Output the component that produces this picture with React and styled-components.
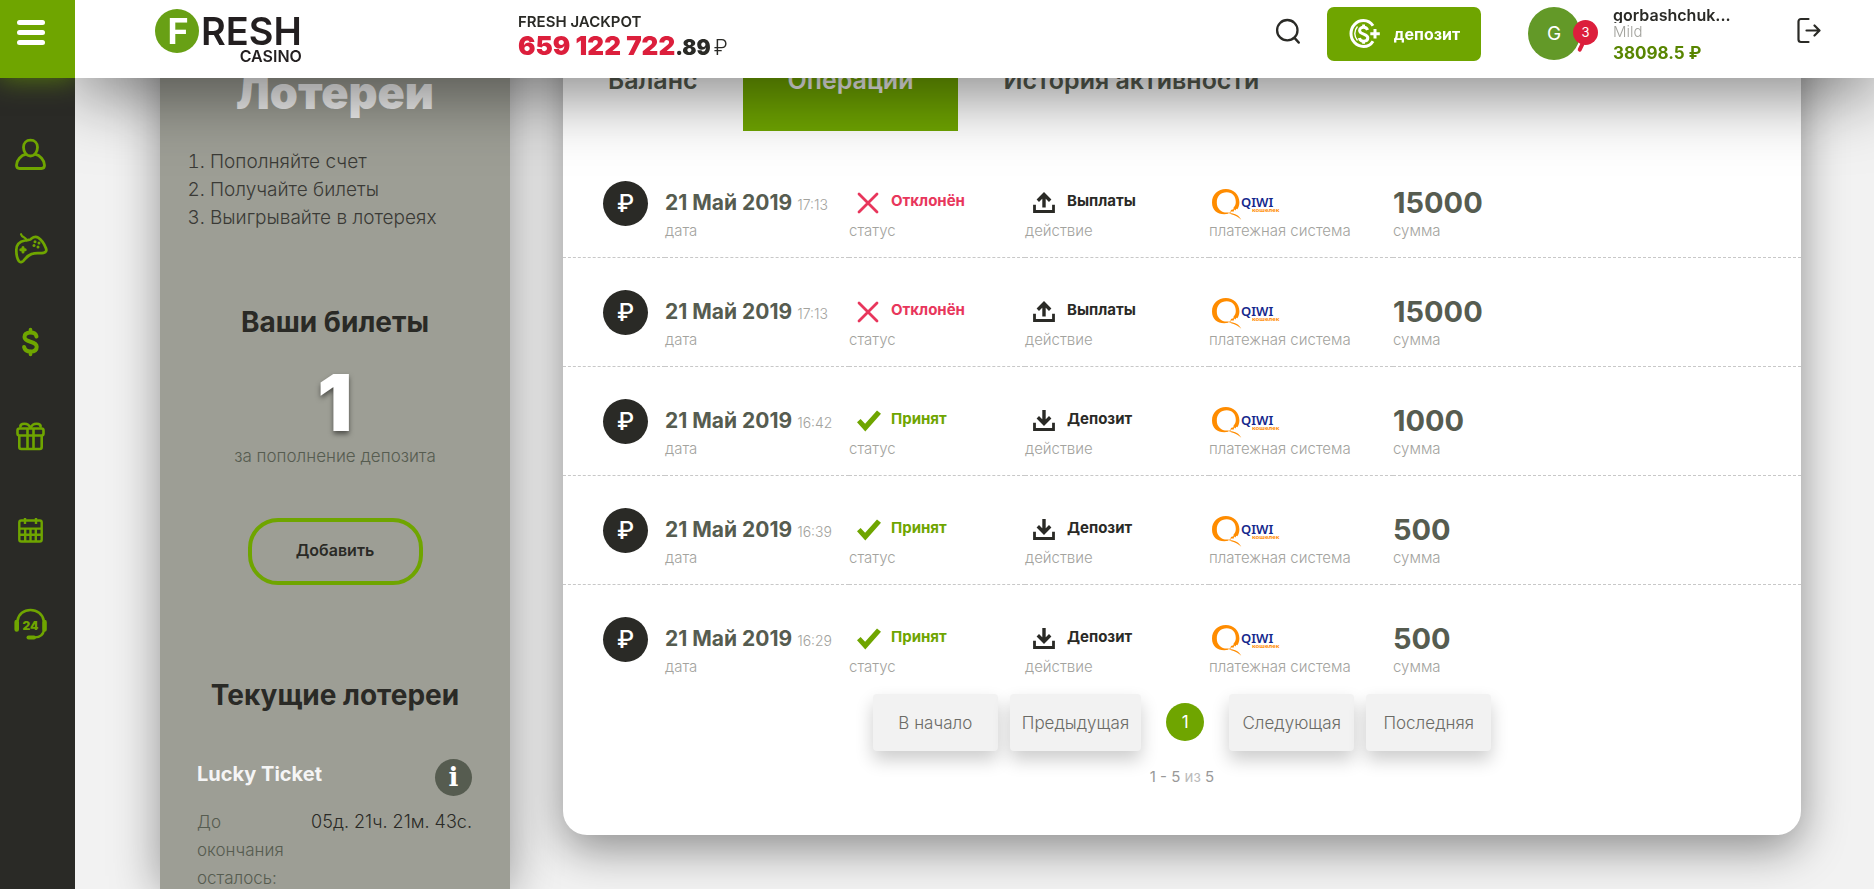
import React from 'react';
import styled, { createGlobalStyle, ThemeProvider } from 'styled-components';

const theme = {
	green: '#6fa500',
	dark: '#2a2a26',
	red: '#dc1f3c',
	pink: '#e8365c',
	olive: '#565c50',
	muted: '#a3a39e',
	panel: '#9d9e95',
	page: '#f2f2f2',
};

const operations = [
	{ id: 1, date: '21 Май 2019', time: '17:13', accepted: false, sum: '15000' },
	{ id: 2, date: '21 Май 2019', time: '17:13', accepted: false, sum: '15000' },
	{ id: 3, date: '21 Май 2019', time: '16:42', accepted: true, sum: '1000' },
	{ id: 4, date: '21 Май 2019', time: '16:39', accepted: true, sum: '500' },
	{ id: 5, date: '21 Май 2019', time: '16:29', accepted: true, sum: '500' },
];

const ProfileIcon = () => (
	<svg width="32" height="32" viewBox="0 0 32 32" fill="none" stroke="currentColor" strokeWidth="2.800" strokeLinejoin="round">
		<path d="M16.500 2.200c4.200 0 7 3 7 7 0 4.400-2.800 8.800-7 8.800s-7-4.400-7-8.800c0-4 2.800-7 7-7z" />
		<path d="M12.100 16.200C7 17.400 2.500 22 2.500 27.300c0 2 1 3.200 3 3.200h22c2 0 3-1.200 3-3.200 0-5.300-4.500-9.900-9.600-11.100" />
	</svg>
);

const GamesIcon = () => (
	<svg width="34" height="32" viewBox="0 0 34 32" fill="none" stroke="currentColor" strokeWidth="2.700" strokeLinecap="round" strokeLinejoin="round">
		<path d="M7 2.200c1 3.800 5 2.200 5.500 6" strokeWidth="2.200" />
		<path d="M11 8.500C5.500 9.500 2.300 12 2.300 18c0 4 .8 8.500 2.500 11 1.200 1.800 3.200 1.300 4.600-.1 2.600-2.800 4.400-5.700 8.400-7 4-1.400 8-.2 11.800-1 2.800-.6 3.300-2.500 2.200-5-1.600-4-4-7.800-7.600-10.200-3.900-2.500-6 .5-7.600 1.600-1.500.9-3.500.6-5.600 1.200z" />
		<path d="M9 15.500v4.400M6.800 17.700h4.400" strokeWidth="3" />
		<g fill="currentColor" stroke="none">
			<circle cx="21" cy="9.800" r="1.500" />
			<circle cx="25" cy="11" r="1.500" />
			<circle cx="20" cy="13.600" r="1.500" />
			<circle cx="24" cy="14.900" r="1.500" />
		</g>
	</svg>
);

const CashIcon = () => (
	<svg width="32" height="32" viewBox="0 0 32 32" fill="none" stroke="currentColor" strokeLinecap="round">
		<path d="M22.500 10.500C21.800 7.600 19.500 6.600 16.500 6.600c-3.600 0-6 1.500-6 4.500 0 6.200 12.200 3 12.200 9.600 0 3.200-2.600 4.800-6.200 4.800-3.500 0-5.800-1.500-6.400-4.500" strokeWidth="4" />
		<path d="M16.500 3.500v3M16.500 25.500v3" strokeWidth="3.600" />
	</svg>
);

const GiftIcon = () => (
	<svg width="32" height="32" viewBox="0 0 32 32" fill="none" stroke="currentColor" strokeWidth="2.600" strokeLinejoin="round">
		<rect x="3.500" y="8.500" width="26" height="7" rx="2" />
		<path d="M5.300 15.500V27c0 1.200.7 2 2 2h18.400c1.300 0 2-.8 2-2V15.500" />
		<path d="M13.500 8.500V29M19.500 8.500V29" />
		<path d="M16.500 8c-1.200-3-3.500-4.300-6-4.300-3 0-5 1.600-3.600 3.800M16.500 8c1.200-3 3.500-4.300 6-4.300 3 0 5 1.600 3.600 3.800" />
	</svg>
);

const CalendarIcon = () => (
	<svg width="32" height="32" viewBox="0 0 32 32" fill="none" stroke="currentColor" strokeWidth="2.400">
		<rect x="5.300" y="6.500" width="22.400" height="21" rx="2" />
		<path d="M11 4v6M22 4v6M5.500 14.600h22M5.500 20.800h22M11.200 14.600v12.900M16.500 14.600v12.900M21.800 14.600v12.900" />
	</svg>
);

const SupportIcon = () => (
	<svg width="34" height="32" viewBox="0 0 34 32" fill="none" stroke="currentColor" strokeLinecap="round">
		<path d="M3.600 12.500C4.500 6 10 2 16.500 2S28.500 6 29.700 12.500" strokeWidth="2.600" />
		<path d="M2.700 14v7.500M30.500 14v7.500" strokeWidth="4.600" />
		<path d="M30 22c-.8 4.800-4 7.300-9 7.400" strokeWidth="2.400" />
		<path d="M14.500 29.500h5.500" strokeWidth="4" />
		<text x="16.500" y="21.500" textAnchor="middle" fontFamily="Inter, sans-serif" fontSize="12" fontWeight="900" fill="currentColor" stroke="none">24</text>
	</svg>
);

const SearchIcon = () => (
	<svg width="26" height="28" viewBox="0 0 26 28" fill="none" stroke="currentColor" strokeWidth="2.300" strokeLinecap="round">
		<circle cx="12.300" cy="13.200" r="10.200" />
		<path d="M19.500 20.900l4.300 4.700" />
	</svg>
);

const DepositIcon = () => (
	<svg width="32" height="36" viewBox="0 0 32 36" fill="none" stroke="currentColor">
		<path d="M25 9.800C23 6.600 19.600 4.500 15.500 4.500 8.200 4.500 3 10.600 3 17.500S8.200 30.500 15.500 30.500c4.100 0 7.500-2 9.500-5.300" strokeWidth="3" />
		<path d="M9.500 10.500c-3.600 4-3.600 10 0 14" strokeWidth="1.400" />
		<path d="M19.500 14c-.5-1.900-1.900-2.700-3.900-2.700-2.300 0-4 1.100-4 3.100 0 4.400 8.200 2.900 8.200 7.400 0 2.300-1.800 3.400-4.100 3.400s-3.900-1.100-4.300-3.200" strokeWidth="3" />
		<path d="M15.600 8.500v2.800M15.600 25.200v2.600" strokeWidth="2.800" />
		<path d="M27 13v9.500M22.300 17.700h9.500" strokeWidth="3" />
	</svg>
);

const LogoutIcon = () => (
	<svg width="24" height="28" viewBox="0 0 24 28" fill="none" stroke="currentColor" strokeWidth="2.200" strokeLinecap="round" strokeLinejoin="round">
		<path d="M11.500 2H4C2.500 2 1.500 3 1.500 4.500v18C1.500 24 2.500 25 4 25h7.500" />
		<path d="M9.500 13.500h12.500M17.500 8.500l5 5-5 5" />
	</svg>
);

const RejectedIcon = () => (
	<svg width="22" height="22" viewBox="0 0 22 22" fill="none" stroke="currentColor" strokeWidth="2.800" strokeLinecap="round">
		<path d="M2 2l18 18M20 2L2 20" />
	</svg>
);

const AcceptedIcon = () => (
	<svg width="24" height="22" viewBox="0 0 24 22" fill="currentColor">
		<path d="M0 12.300L3.600 9l4.500 4.800L20 .6 24 3.800 8.300 21.500z" />
	</svg>
);

const TransferIcon = ({ down }) => (
	<svg width="22" height="22" viewBox="0 0 22 22" fill="none" stroke="currentColor" strokeWidth="3.400">
		<path d="M1.500 12.800v6.700h19v-6.700" strokeWidth="2.800" />
		{down ? (
			<path d="M11 0v13M4.800 7.300l6.200 6.200 6.200-6.200" />
		) : (
			<path d="M11 15.500V2.500M4.800 8.700L11 2.500l6.200 6.200" />
		)}
	</svg>
);

const QiwiLogo = () => (
	<svg width="68" height="32" viewBox="0 0 68 32" role="img" aria-label="QIWI Кошелек">
		<path fillRule="evenodd" fill="#ff8c00" d="M13.800 0C21.600 0 27.400 5.600 27.400 13.200c0 2.700-.7 5-2 7l-1.200-.4-.6 1.600-1.200-.8-1 2.200-1.800-.6-.8 1.600-1.900-.7-.7 1.700C7 26.600 0 22.200 0 13.400 0 5.600 6 0 13.800 0zM14.800 3.300C8.700 3.300 4.800 7.400 4.800 13.500S9 23.600 15 23.600c1.300 0 2.400-.2 3.400-.6l.6-2 2.400-.8.200-1.800c1.500-1.500 2.200-3.300 2.200-5.500 0-5.700-3.500-9.600-9-9.600z" />
		<path fill="#ff8c00" d="M16 24.300c6.300-.6 10.800 1.500 13.200 6.500-3.500-3.700-7.600-5-13.200-6.500z" />
		<text x="29" y="18" fontFamily="'Noto Sans', sans-serif" fontSize="13" fontWeight="600" fill="#14288c">QIWI</text>
		<text x="40" y="23" fontFamily="'Noto Sans', sans-serif" fontSize="6" fontWeight="700" fill="#ff8c00">кошелек</text>
	</svg>
);

const navItems = [
	{ label: 'Профиль', Icon: ProfileIcon },
	{ label: 'Игры', Icon: GamesIcon },
	{ label: 'Касса', Icon: CashIcon },
	{ label: 'Бонусы', Icon: GiftIcon },
	{ label: 'Календарь', Icon: CalendarIcon },
	{ label: 'Поддержка', Icon: SupportIcon },
];

const Sidebar = () => (
	<SideBar>
		<MenuButton type="button" aria-label="Меню">
			<MenuLine />
			<MenuLine />
			<MenuLine />
		</MenuButton>
		<SideNav>
			{navItems.map(({ label, Icon }) => (
				<SideLink key={label} href="#" aria-label={label}>
					<Icon />
				</SideLink>
			))}
		</SideNav>
	</SideBar>
);

const Header = () => (
	<TopBar>
		<LogoLink href="#">
			<LogoCircle>F</LogoCircle>
			<LogoWords>
				<LogoName>RESH</LogoName>
				<LogoSub>CASINO</LogoSub>
			</LogoWords>
		</LogoLink>
		<Jackpot>
			<JackpotTitle>FRESH JACKPOT</JackpotTitle>
			<JackpotSum>
				659 122 722<Cents>.89</Cents>
				<Currency>₽</Currency>
			</JackpotSum>
		</Jackpot>
		<IconButton type="button" aria-label="Поиск">
			<SearchIcon />
		</IconButton>
		<DepositButton type="button">
			<DepositIcon />
			депозит
		</DepositButton>
		<Avatar>
			G
			<Badge>3</Badge>
		</Avatar>
		<UserInfo>
			<UserName>gorbashchuk...</UserName>
			<UserLevel>Mild</UserLevel>
			<UserBalance>38098.5 ₽</UserBalance>
		</UserInfo>
		<IconButton type="button" aria-label="Выход">
			<LogoutIcon />
		</IconButton>
	</TopBar>
);

const Lotteries = () => (
	<LotteryPanel>
		<LotteryTitle>Лотереи</LotteryTitle>
		<Steps>
			<li>Пополняйте счет</li>
			<li>Получайте билеты</li>
			<li>Выигрывайте в лотереях</li>
		</Steps>
		<SectionTitle>Ваши билеты</SectionTitle>
		<TicketCount>1</TicketCount>
		<TicketNote>за пополнение депозита</TicketNote>
		<AddButton type="button">Добавить</AddButton>
		<SectionTitle>Текущие лотереи</SectionTitle>
		<Lottery>
			<LotteryHead>
				<LotteryName>Lucky Ticket</LotteryName>
				<InfoButton type="button" aria-label="Информация">i</InfoButton>
			</LotteryHead>
			<LotteryTime>
				<TimeLabel>До окончания осталось:</TimeLabel>
				<TimeLeft>05д. 21ч. 21м. 43с.</TimeLeft>
			</LotteryTime>
		</Lottery>
	</LotteryPanel>
);

const OperationRow = ({ operation }) => (
	<Row>
		<Cell>
			<CurrencyCircle>₽</CurrencyCircle>
		</Cell>
		<Cell>
			<Value>
				<DateText>{operation.date}</DateText>
				<TimeText>{operation.time}</TimeText>
			</Value>
			<CellLabel>дата</CellLabel>
		</Cell>
		<Cell>
			<IconValue $color={operation.accepted ? 'green' : 'pink'}>
				<IconSlot>{operation.accepted ? <AcceptedIcon /> : <RejectedIcon />}</IconSlot>
				{operation.accepted ? 'Принят' : 'Отклонён'}
			</IconValue>
			<CellLabel>статус</CellLabel>
		</Cell>
		<Cell>
			<IconValue $color="dark">
				<IconSlot><TransferIcon down={operation.accepted} /></IconSlot>
				{operation.accepted ? 'Депозит' : 'Выплаты'}
			</IconValue>
			<CellLabel>действие</CellLabel>
		</Cell>
		<Cell>
			<LogoValue><QiwiLogo /></LogoValue>
			<CellLabel>платежная система</CellLabel>
		</Cell>
		<Cell>
			<Value><SumText>{operation.sum}</SumText></Value>
			<CellLabel>сумма</CellLabel>
		</Cell>
	</Row>
);

const Account = () => (
	<AccountPanel>
		<Tabs>
			<Tab type="button">Баланс</Tab>
			<Tab type="button" $active>Операции</Tab>
			<Tab type="button">История активности</Tab>
		</Tabs>
		<Table>
			<colgroup>
				<Col $width={102} />
				<Col $width={184} />
				<Col $width={176} />
				<Col $width={184} />
				<Col $width={184} />
				<col />
			</colgroup>
			<tbody>
				{operations.map(operation => (
					<OperationRow key={operation.id} operation={operation} />
				))}
			</tbody>
		</Table>
		<Pagination>
			<PageButton type="button">В начало</PageButton>
			<PageButton type="button">Предыдущая</PageButton>
			<PageNumber type="button">1</PageNumber>
			<PageButton type="button">Следующая</PageButton>
			<PageButton type="button">Последняя</PageButton>
		</Pagination>
		<PageInfo>1 - 5 <span>из</span> 5</PageInfo>
	</AccountPanel>
);

const App = () => (
	<ThemeProvider theme={theme}>
		<GlobalStyle />
		<Sidebar />
		<Header />
		<Content>
			<Lotteries />
			<Account />
		</Content>
	</ThemeProvider>
);

const GlobalStyle = createGlobalStyle`
	* {
		box-sizing: border-box;
	}
	body {
		margin: 0;
		background: ${props => props.theme.page};
		color: ${props => props.theme.dark};
		font-family: Inter, 'Open Sans', sans-serif;
	}
	svg {
		display: block;
	}
`;

const Button = styled.button`
	padding: 0;
	border: none;
	background: none;
	color: inherit;
	font: inherit;
	cursor: pointer;
`;

const SideBar = styled.aside`
	position: fixed;
	z-index: 3;
	top: 0;
	bottom: 0;
	left: 0;
	width: 75px;
	overflow: hidden;
	background: ${props => props.theme.dark};
`;

const MenuButton = styled(Button)`
	display: flex;
	flex-direction: column;
	gap: 5px;
	width: 100%;
	height: 78px;
	padding: 20px 0 0 17px;
	background: ${props => props.theme.green};
	box-shadow: 0 2px 24px rgba(111, 165, 0, 0.6);
`;

const MenuLine = styled.span`
	width: 28px;
	height: 5px;
	border-radius: 3px;
	background: #fff;
`;

const SideNav = styled.nav`
	display: flex;
	flex-direction: column;
	padding-top: 29px;
`;

const SideLink = styled.a`
	display: flex;
	align-items: center;
	height: 94px;
	padding-left: 14px;
	color: ${props => props.theme.green};
`;

const TopBar = styled.header`
	position: fixed;
	z-index: 2;
	top: 0;
	left: 75px;
	right: 0;
	display: flex;
	align-items: flex-start;
	height: 78px;
	padding: 7px 53px 0 80px;
	background: #fff;
	box-shadow: 0 14px 70px rgba(0, 0, 0, 0.52);
`;

const LogoLink = styled.a`
	display: flex;
	width: 363px;
	padding-top: 2px;
	color: #231f20;
	text-decoration: none;
`;

const LogoCircle = styled.span`
	width: 44px;
	height: 44px;
	padding-left: 2px;
	border-radius: 50%;
	background: #68a015;
	color: #fff;
	font-size: 36px;
	font-weight: 700;
	line-height: 44px;
	text-align: center;
`;

const LogoWords = styled.span`
	display: flex;
	flex-direction: column;
	align-items: flex-end;
	padding-left: 2px;
`;

const LogoName = styled.span`
	height: 38px;
	font-size: 38px;
	font-weight: 600;
	line-height: 44px;
`;

const LogoSub = styled.span`
	font-size: 16px;
	font-weight: 600;
	line-height: 18px;
`;

const Jackpot = styled.div`
	margin-right: auto;
	padding-top: 6px;
	white-space: nowrap;
`;

const JackpotTitle = styled.div`
	font-size: 15px;
	font-weight: 600;
	line-height: 18px;
`;

const JackpotSum = styled.div`
	color: ${props => props.theme.red};
	font-size: 26px;
	font-weight: 900;
	line-height: 30px;
`;

const Cents = styled.span`
	color: ${props => props.theme.dark};
	font-size: 21px;
`;

const Currency = styled.span`
	padding-left: 3px;
	color: ${props => props.theme.dark};
	font-size: 21px;
	font-weight: 300;
`;

const IconButton = styled(Button)`
	padding-top: 10px;
`;

const DepositButton = styled(Button)`
	display: flex;
	align-items: center;
	justify-content: center;
	gap: 14px;
	width: 154px;
	height: 54px;
	margin: 0 47px 0 26px;
	border-radius: 7px;
	background: ${props => props.theme.green};
	color: #fff;
	font-size: 16px;
	font-weight: 700;
`;

const Avatar = styled.div`
	position: relative;
	width: 52px;
	height: 53px;
	border-radius: 50%;
	background: #639928;
	color: #fff;
	font-size: 19px;
	line-height: 53px;
	text-align: center;
`;

const Badge = styled.span`
	position: absolute;
	top: 13px;
	left: 45px;
	width: 25px;
	height: 25px;
	border-radius: 50%;
	background: ${props => props.theme.red};
	font-size: 13px;
	line-height: 25px;

	&::after {
		content: '';
		position: absolute;
		top: 22px;
		left: 6px;
		width: 4px;
		height: 10px;
		border-radius: 2px;
		background: ${props => props.theme.red};
		transform: rotate(25deg);
	}
`;

const UserInfo = styled.div`
	width: 120px;
	margin: 0 64px 0 33px;
	white-space: nowrap;
`;

const UserName = styled.div`
	height: 16px;
	overflow: hidden;
	font-size: 16px;
	font-weight: 600;
	line-height: 17px;
`;

const UserLevel = styled.div`
	color: ${props => props.theme.muted};
	font-size: 15px;
	font-weight: 300;
	line-height: 18px;
`;

const UserBalance = styled.div`
	color: #588500;
	font-size: 17px;
	font-weight: 700;
	line-height: 24px;
`;

const Content = styled.main`
	display: grid;
	grid-template-columns: 350px minmax(0, 1fr);
	align-items: start;
	gap: 53px;
	min-height: 100vh;
	padding: 0 73px 0 160px;
	overflow: hidden;
`;

const LotteryPanel = styled.section`
	display: flex;
	flex-direction: column;
	align-items: center;
	align-self: stretch;
	padding: 66px 27px 0;
	background: ${props => props.theme.panel};
	box-shadow: 0 0 45px rgba(0, 0, 0, 0.4);
`;

const LotteryTitle = styled.h1`
	margin: 0;
	color: #f2f2f2;
	font-size: 45px;
	font-weight: 900;
	line-height: 54px;
`;

const Steps = styled.ol`
	align-self: stretch;
	margin: 28px 0 0;
	padding-left: 23px;
	color: #3a3a36;
	font-size: 19px;
	font-weight: 300;
	line-height: 28px;
`;

const SectionTitle = styled.h2`
	margin: 70px 0 0;
	font-size: 28px;
	font-weight: 700;
	line-height: 40px;
`;

const TicketCount = styled.div`
	margin-top: 22px;
	color: #fff;
	font-size: 78px;
	font-weight: 900;
	line-height: 78px;
	text-shadow: 0 3px 5px rgba(0, 0, 0, 0.5);
`;

const TicketNote = styled.div`
	color: ${props => props.theme.olive};
	font-size: 17px;
	font-weight: 300;
	line-height: 28px;
`;

const AddButton = styled(Button)`
	height: 67px;
	width: 175px;
	margin: 48px 0 20px;
	padding-bottom: 4px;
	border: 4px solid ${props => props.theme.green};
	border-radius: 30px;
	font-size: 16px;
	font-weight: 600;
`;

const Lottery = styled.div`
	align-self: stretch;
	padding: 44px 11px 0 10px;
`;

const LotteryHead = styled.div`
	display: flex;
	justify-content: space-between;
	height: 49px;
`;

const LotteryName = styled.h3`
	margin: 0;
	color: #f5f5f5;
	font-size: 20px;
	font-weight: 700;
	line-height: 30px;
`;

const InfoButton = styled(Button)`
	width: 37px;
	height: 37px;
	border-radius: 50%;
	background: ${props => props.theme.olive};
	color: #fff;
	font-family: 'DejaVu Serif', serif;
	font-size: 26px;
	font-weight: 700;
	line-height: 37px;
`;

const LotteryTime = styled.div`
	display: flex;
	justify-content: space-between;
	line-height: 28px;
`;

const TimeLabel = styled.span`
	width: 100px;
	color: ${props => props.theme.olive};
	font-size: 17px;
	font-weight: 300;
`;

const TimeLeft = styled.span`
	font-size: 18px;
	font-weight: 300;
	white-space: nowrap;
`;

const AccountPanel = styled.section`
	padding-bottom: 47px;
	border-radius: 0 0 24px 24px;
	background: #fff;
	box-shadow: 0 14px 45px rgba(0, 0, 0, 0.42);
`;

const Tabs = styled.div`
	display: flex;
	padding: 29px 0 18px;
`;

const Tab = styled(Button)`
	height: 102px;
	padding: 0 45px;
	background: ${props => (props.$active ? props.theme.green : 'none')};
	color: ${props => (props.$active ? '#f2f2f2' : props.theme.olive)};
	font-size: 25px;
	font-weight: 600;
	white-space: nowrap;
`;

const Table = styled.table`
	width: 100%;
	border-spacing: 0;
	table-layout: fixed;
`;

const Col = styled.col`
	width: ${props => props.$width}px;
`;

const Cell = styled.td`
	height: 109px;
	padding: 32px 0 0;
	vertical-align: top;
	white-space: nowrap;

	&:first-child {
		padding-left: 40px;
	}
`;

const Row = styled.tr`
	&:not(:last-child) ${Cell} {
		border-bottom: 1px dashed #c8c8c8;
	}
`;

const CurrencyCircle = styled.span`
	display: block;
	width: 45px;
	height: 45px;
	border-radius: 50%;
	background: ${props => props.theme.dark};
	color: #fff;
	font-size: 24px;
	font-weight: 500;
	line-height: 45px;
	text-align: center;
`;

const Value = styled.div`
	display: flex;
	align-items: baseline;
	gap: 5px;
	height: 40px;
	color: ${props => props.theme.olive};
	line-height: 44px;
`;

const IconValue = styled.div`
	display: flex;
	align-items: center;
	height: 40px;
	padding: 0 0 2px 8px;
	color: ${props => props.theme[props.$color]};
	font-size: 15px;
	font-weight: 700;
`;

const IconSlot = styled.span`
	width: 34px;
	padding-top: 6px;
`;

const LogoValue = styled.div`
	height: 40px;
	padding: 8px 0 0 3px;
`;

const CellLabel = styled.div`
	color: ${props => props.theme.muted};
	font-size: 15px;
	font-weight: 300;
	line-height: 20px;
`;

const DateText = styled.span`
	font-size: 21px;
	font-weight: 700;
`;

const TimeText = styled.span`
	color: ${props => props.theme.muted};
	font-size: 14px;
	font-weight: 300;
`;

const SumText = styled.span`
	font-size: 29px;
	font-weight: 700;
`;

const Pagination = styled.nav`
	display: flex;
	justify-content: center;
	gap: 12px;
`;

const PageButton = styled(Button)`
	min-width: 125px;
	height: 57px;
	padding: 0 12px;
	border-radius: 4px;
	background: ${props => props.theme.page};
	box-shadow: 0 9px 18px rgba(0, 0, 0, 0.2);
	color: #6b6b66;
	font-size: 17px;
	font-weight: 300;
`;

const PageNumber = styled(Button)`
	width: 38px;
	height: 38px;
	margin: 9px 13px 0;
	border-radius: 50%;
	background: ${props => props.theme.green};
	color: #fff;
	font-size: 17px;
`;

const PageInfo = styled.p`
	margin: 15px 0 0;
	color: #999;
	font-size: 15px;
	line-height: 22px;
	text-align: center;

	span {
		color: #bbb;
	}
`;

export default App;
